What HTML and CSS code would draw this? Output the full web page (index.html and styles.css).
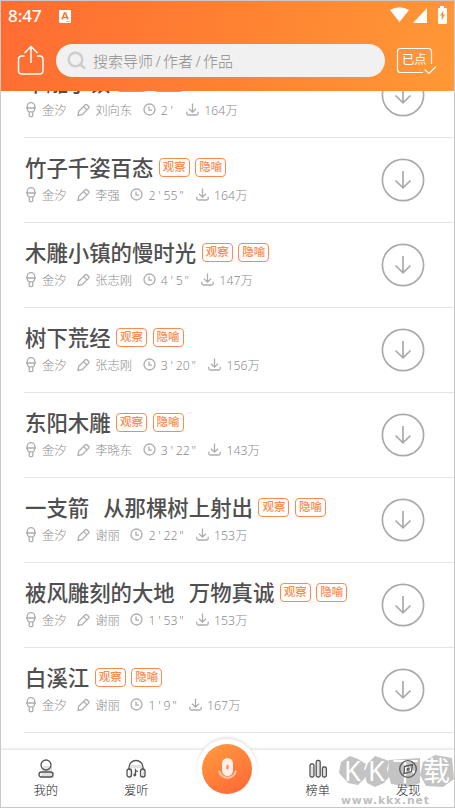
FILE: index.html
```html
<!DOCTYPE html>
<html lang="zh-CN">
<head>
<meta charset="utf-8">
<title>作品</title>
<link rel="stylesheet" href="styles.css">
</head>
<body>
<svg class="defs" aria-hidden="true">
  <symbol id="mic" viewBox="0 0 12 16"><path d="M2.200 5.800V4.500a3.800 3.800 0 0 1 7.600 0v1.300M1 6h10M2.200 6.500c0 2 1 3 2 3.300h3.600c1-.3 2-1.300 2-3.300M4.200 10v3.600q0 1 1 1h1.600q1 0 1-1V10"/></symbol>
  <symbol id="pen" viewBox="0 0 13 16"><path d="M1 13.500l.7-4.200L8.300 2.700q.8-.7 1.600 0l1.800 1.800q.7.8 0 1.600L5.200 12.600zM6.600 4.600l3.300 3.300"/></symbol>
  <symbol id="clock" viewBox="0 0 13 16"><circle cx="6.500" cy="7.500" r="5.500"/><path d="M6 4.500v3.700h3"/></symbol>
  <symbol id="down" viewBox="0 0 13 16"><path d="M6.500 1.500v8.500M3 6.800l3.500 3.400L10 6.800M.8 9.800v1.700q0 1.500 1.500 1.500h8.400q1.500 0 1.500-1.500V9.800"/></symbol>
  <symbol id="get" viewBox="0 0 44 44"><circle cx="22" cy="22" r="20.600"/><path d="M22 13v16.500M14.500 22.500L22 29.800l7.500-7.300"/></symbol>
</svg>
<div class="screen">
  <header class="header">
    <div class="status">
      <span class="time">8:47</span>
      <svg class="app" viewBox="0 0 12 13"><rect width="12" height="13" rx="1" fill="#fff"/><path d="M3 9.500L5.500 3h1L9 9.500M4 7.500h4" fill="none" stroke="#ff7135" stroke-width="1.600"/><path d="M7 11.500h4" stroke="#ff9b70" stroke-width=".7"/></svg>
      <svg class="signals" viewBox="0 0 58 18"><path d="M0 4Q9.500-1.500 19 4L9.500 16zM23 17L37 2v15zM50 0h4v2h3v15q0 1-1 1h-7q-1 0-1-1V3q0-1 1-1h1z" fill="#fff"/><path d="M53.500 4.500l-3.500 5h2l-.5 5 3.500-6h-2z" fill="#ff8b34"/></svg>
    </div>
    <div class="tools">
      <svg class="share" viewBox="0 0 28 31"><path d="M7.500 11H5q-3.500 0-3.500 3.500v11Q1.500 29 5 29h17.500q3.500 0 3.500-3.500v-11Q26 11 22.500 11H20M14 18V2M7.500 8L14 1.500 20.500 8"/></svg>
      <div class="search">
        <svg class="lens" viewBox="0 0 20 20"><circle cx="8.500" cy="8.500" r="6.800"/><path d="M13.500 13.500l4.500 4"/></svg>
        <span class="hint">搜索导师<i>/</i>作者<i>/</i>作品</span>
      </div>
      <div class="picked">
        <svg viewBox="0 0 41 28"><path d="M27 25.500H4.500q-3 0-3-3v-18q0-3 3-3h28q3 0 3 3V17M28.500 22.500l4.500 4 7-7"/></svg>
        <span>已点</span>
      </div>
    </div>
  </header>
  <main class="list">
    <article class="row"><div class="info"><h2>木雕小镇<b>观察</b><b>隐喻</b></h2><p><svg class="m"><use href="#mic"/></svg><span>金汐</span><svg><use href="#pen"/></svg><span>刘向东</span><svg><use href="#clock"/></svg><span>2<i>'</i></span><svg><use href="#down"/></svg><span>164万</span></p></div><svg class="get"><use href="#get"/></svg></article>
    <article class="row"><div class="info"><h2>竹子千姿百态<b>观察</b><b>隐喻</b></h2><p><svg class="m"><use href="#mic"/></svg><span>金汐</span><svg><use href="#pen"/></svg><span>李强</span><svg><use href="#clock"/></svg><span>2<i>'</i>55<i>"</i></span><svg><use href="#down"/></svg><span>164万</span></p></div><svg class="get"><use href="#get"/></svg></article>
    <article class="row"><div class="info"><h2>木雕小镇的慢时光<b>观察</b><b>隐喻</b></h2><p><svg class="m"><use href="#mic"/></svg><span>金汐</span><svg><use href="#pen"/></svg><span>张志刚</span><svg><use href="#clock"/></svg><span>4<i>'</i>5<i>"</i></span><svg><use href="#down"/></svg><span>147万</span></p></div><svg class="get"><use href="#get"/></svg></article>
    <article class="row"><div class="info"><h2>树下荒经<b>观察</b><b>隐喻</b></h2><p><svg class="m"><use href="#mic"/></svg><span>金汐</span><svg><use href="#pen"/></svg><span>张志刚</span><svg><use href="#clock"/></svg><span>3<i>'</i>20<i>"</i></span><svg><use href="#down"/></svg><span>156万</span></p></div><svg class="get"><use href="#get"/></svg></article>
    <article class="row"><div class="info"><h2>东阳木雕<b>观察</b><b>隐喻</b></h2><p><svg class="m"><use href="#mic"/></svg><span>金汐</span><svg><use href="#pen"/></svg><span>李晓东</span><svg><use href="#clock"/></svg><span>3<i>'</i>22<i>"</i></span><svg><use href="#down"/></svg><span>143万</span></p></div><svg class="get"><use href="#get"/></svg></article>
    <article class="row"><div class="info"><h2>一支箭<span class="gap"></span>从那棵树上射出<b>观察</b><b>隐喻</b></h2><p><svg class="m"><use href="#mic"/></svg><span>金汐</span><svg><use href="#pen"/></svg><span>谢丽</span><svg><use href="#clock"/></svg><span>2<i>'</i>22<i>"</i></span><svg><use href="#down"/></svg><span>153万</span></p></div><svg class="get"><use href="#get"/></svg></article>
    <article class="row"><div class="info"><h2>被风雕刻的大地<span class="gap"></span>万物真诚<b>观察</b><b>隐喻</b></h2><p><svg class="m"><use href="#mic"/></svg><span>金汐</span><svg><use href="#pen"/></svg><span>谢丽</span><svg><use href="#clock"/></svg><span>1<i>'</i>53<i>"</i></span><svg><use href="#down"/></svg><span>153万</span></p></div><svg class="get"><use href="#get"/></svg></article>
    <article class="row"><div class="info"><h2>白溪江<b>观察</b><b>隐喻</b></h2><p><svg class="m"><use href="#mic"/></svg><span>金汐</span><svg><use href="#pen"/></svg><span>谢丽</span><svg><use href="#clock"/></svg><span>1<i>'</i>9<i>"</i></span><svg><use href="#down"/></svg><span>167万</span></p></div><svg class="get"><use href="#get"/></svg></article>
  </main>
  <nav class="nav">
    <a><svg viewBox="0 0 22 22"><path class="shade" d="M8 8h9v6h2v6H6z"/><circle cx="11" cy="7" r="5"/><rect x="4" y="14" width="14" height="5" rx="2.500"/></svg>我的</a>
    <a><svg viewBox="0 0 22 22"><path class="shade" d="M5 7h13l3 12h-4V10H7v9H4z"/><path d="M4 12V9.500a7 7 0 0 1 14 0V12"/><rect x="2" y="11" width="4.500" height="8" rx="2.200"/><rect x="15.500" y="11" width="4.500" height="8" rx="2.200"/><path d="M10.500 17v-5q1 1.500 2.500 1.500"/><circle cx="9.800" cy="17" r=".8"/></svg>爱听</a>
    <div class="record"><svg viewBox="0 0 50 50"><rect x="20" y="14" width="11" height="18" rx="5.500" fill="#ffede6"/><ellipse cx="25.500" cy="23" rx="1.200" ry="2.600" fill="#ff8b4b"/><path d="M17 26.500a8.600 8.600 0 0 0 17 0" fill="none" stroke="#ffc5a8" stroke-width="2"/></svg></div>
    <a><svg viewBox="0 0 22 22"><path class="shade" d="M4 8h3v11H4zM10 4h3v15h-3zM16 10h3v9h-3z"/><rect x="3" y="6" width="4" height="13" rx="1.500"/><rect x="9.200" y="2.500" width="4" height="16.500" rx="1.500"/><rect x="15.400" y="9" width="4" height="10" rx="1.500"/></svg>榜单</a>
    <a><svg viewBox="0 0 22 22"><circle cx="11" cy="11" r="8.300"/><path d="M7.500 8.500l8-2-1 7-7.500 2.200z"/><circle cx="11.200" cy="11.200" r="1"/></svg>发现</a>
  </nav>
  <div class="watermark">
    <svg viewBox="0 0 116 34"><path d="M3 7l9-6 8 3 8 5-2 5 3 5-3 5-6 6-10-2-9-10zM30 8l7-7 9 3 5 2-2 8 2 8-5 6-9 4-8-4-3-10zM51 5l31-2v25l-10 4-19-3-3-11zM85 7l12-7 17 3 2 21-11 8-17-1-6-11z"/></svg>
    <div class="brand"><span>K</span><span>K</span><span>下</span><span>载</span></div>
    <div class="site">www.kkx.net</div>
  </div>
</div>
</body>
</html>
```

FILE: styles.css
```css
* { box-sizing: border-box; }
body { margin: 0; font-family: "Noto Sans", "Noto Sans CJK SC", sans-serif; }
i { font-style: normal; }
svg { display: block; flex: none; }
.defs { position: absolute; width: 0; height: 0; }
.screen {
  position: relative;
  display: flex;
  flex-direction: column;
  width: 455px;
  height: 808px;
  overflow: hidden;
  border: 1px solid #c8c8c8;
  background: #fff;
}
.header {
  flex: none;
  height: 90px;
  background: linear-gradient(100deg, #ff6c32, #ff8132 50%, #ff9836);
}
.status { display: flex; align-items: center; height: 30px; padding: 0 6px 0 7px; }
.time { width: 51px; font-size: 17px; font-weight: 500; line-height: 30px; color: #fff; }
.app { width: 12px; height: 13px; }
.signals { width: 58px; height: 18px; margin-left: auto; margin-top: -3px; }
.tools { display: flex; align-items: center; height: 60px; padding-left: 16px; }
.share { width: 28px; height: 31px; margin-top: -1px; fill: none; stroke: #fff; stroke-width: 1.500; }
.search {
  display: flex;
  align-items: center;
  width: 329px;
  height: 33px;
  margin-left: 11px;
  margin-top: -1px;
  padding-left: 11px;
  border-radius: 17px;
  background: #f1f1f1;
}
.lens { width: 20px; height: 20px; fill: none; stroke: #cdcdcd; stroke-width: 2.400; }
.hint { margin-left: 6px; font-size: 15px; font-weight: 300; line-height: 30px; color: #8c8c8c; white-space: nowrap; }
.hint i { display: inline-block; width: 10px; text-align: center; }
.picked { position: relative; width: 41px; height: 28px; margin-left: 11px; }
.picked svg { width: 41px; height: 28px; fill: none; stroke: #fff; stroke-width: 1.200; }
.picked span { position: absolute; left: 6px; top: 3px; font-size: 12.300px; line-height: 20px; color: #fff; }

.list { flex: 1; min-height: 0; overflow: hidden; }
.row {
  display: flex;
  align-items: center;
  justify-content: space-between;
  height: 85px;
  margin-left: 23px;
  padding-left: 1px;
  padding-right: 29.500px;
  border-bottom: 1px solid #e5e5e5;
}
.row:first-child { margin-top: -38px; }
h2 {
  display: flex;
  align-items: center;
  height: 31px;
  margin: -1px 0 0;
  font-size: 21.400px;
  font-weight: 500;
  color: #505050;
  white-space: nowrap;
}
h2 .gap { width: 14px; }
h2 b {
  width: 31px;
  height: 19px;
  margin-left: 5.500px;
  margin-top: 1px;
  border: 1px solid #ff8a4d;
  border-radius: 4px;
  font-size: 11.500px;
  font-weight: 500;
  line-height: 16px;
  text-align: center;
  color: #ff8a4d;
}
h2 b + b { margin-left: 5.500px; }
.info p { display: flex; align-items: center; height: 26px; margin: 0; font-size: 12.300px; font-weight: 300; color: #8c8c8c; white-space: nowrap; }
.info p svg { width: 13px; height: 16px; margin: 0 5px 0 10.600px; fill: none; stroke: #adadad; stroke-width: 1.300; }
.info p .m { width: 12px; margin-left: 0; }
.info p i { display: inline-block; width: 8px; text-align: center; }
.get { width: 44px; height: 44px; fill: none; stroke: #aaa; stroke-width: 1.700; }

.nav {
  display: flex;
  flex: none;
  height: 57px;
  background: #fff;
  box-shadow: 0 -1px 3px #ddd;
}
.nav a { position: relative; z-index: 2; display: flex; flex: 1; flex-direction: column; align-items: center; padding-top: 8px; padding-right: 1px; font-size: 12.300px; font-weight: 300; line-height: 18px; color: #222; }
.nav a svg { width: 22px; height: 22px; margin-bottom: 2px; fill: none; stroke: #555; stroke-width: 1.300; }
.nav a .shade { fill: #e2e2e2; stroke: none; }
.record {
  flex: none;
  width: 60px;
  height: 60px;
  margin: -11px 16px 0 15px;
  padding: 5px;
  border-radius: 50%;
  background: #fff;
  box-shadow: 0 -2px 3px #e6e6e6;
}
.record svg { width: 50px; height: 50px; border-radius: 50%; background: linear-gradient(150deg, #ff9c40, #ff6535); }
.watermark { position: absolute; z-index: 1; left: 337px; top: 754px; width: 118px; height: 52px; }
.watermark svg { width: 116px; height: 34px; fill: #c3c3c3; }
.brand { position: absolute; left: 6px; top: 0; display: flex; font-size: 27px; line-height: 32px; color: #fff; }
.brand span { width: 24px; }
.brand span:nth-child(3) { width: 31px; }
.site { position: absolute; left: 3px; top: 41px; font: bold 10.800px/10px "DejaVu Sans", sans-serif; letter-spacing: .9px; color: #c0c0c0; }
```
